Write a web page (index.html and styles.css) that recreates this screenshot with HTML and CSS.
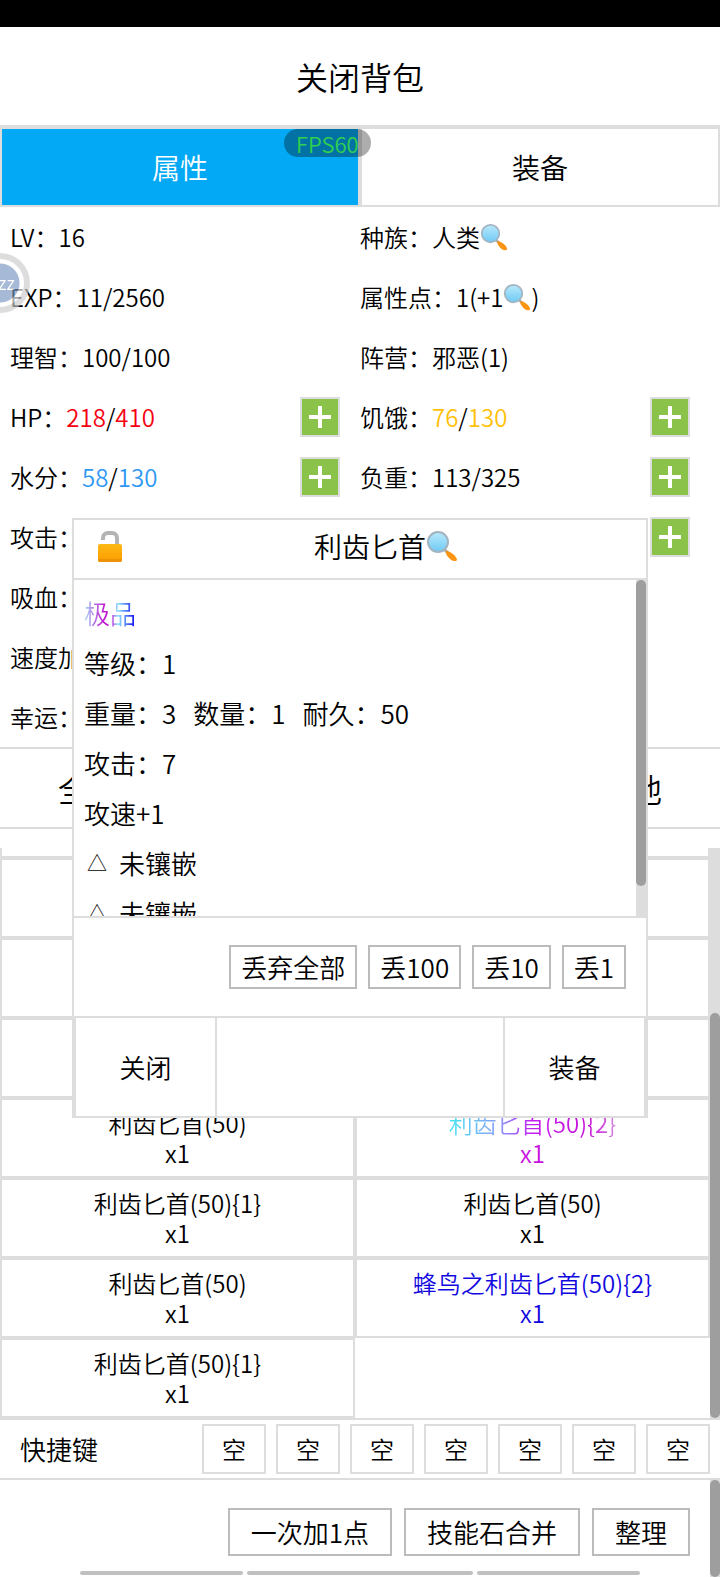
FILE: index.html
```html
<!DOCTYPE html>
<html lang="zh-CN">
<head>
    <meta charset="utf-8">
    <meta name="viewport" content="width=device-width, initial-scale=1">
    <title>背包</title>
    <link rel="stylesheet" href="styles.css">
</head>
<body>
    <!-- shared icons -->
    <svg class="defs" width="0" height="0">
        <defs>
            <linearGradient id="lens" x1="0" y1="0" x2="0" y2="1">
                <stop offset="0" stop-color="#b9e9fb"/>
                <stop offset="1" stop-color="#6fcaf5"/>
            </linearGradient>
            <linearGradient id="gold" x1="0" y1="0" x2="0" y2="1">
                <stop offset="0" stop-color="#fdb913"/>
                <stop offset="1" stop-color="#fb9d00"/>
            </linearGradient>
            <symbol id="magnifier" viewBox="0 0 32 32">
                <path d="M18 19l4 4" stroke="#a9a9a9" stroke-width="3"/>
                <path d="M20 21c3-1 11 5 11 9-1 2-5 1-7-1-3-3-5-6-4-8z" fill="#fb9410"/>
                <circle cx="12" cy="12" r="10" fill="url(#lens)" stroke="#a3b3c0" stroke-width="2"/>
            </symbol>
            <symbol id="unlocked" viewBox="0 0 32 32">
                <path d="M9 10V8c0-3 2-5 5-5h4c3 0 5 2 5 5v7" fill="none" stroke="#b4b4b4" stroke-width="4"/>
                <rect x="4" y="14" width="24" height="18" rx="2" fill="url(#gold)"/>
                <path d="M4 29h24v1a2 2 0 0 1-2 2H6a2 2 0 0 1-2-2z" fill="#ee9208"/>
            </symbol>
        </defs>
    </svg>

    <div class="status-bar"></div>
    <header class="header">
        <button class="close-bag">关闭背包</button>
    </header>

    <nav class="tabs">
        <button class="tab active">属性</button>
        <button class="tab">装备</button>
        <div class="fps">FPS60</div>
    </nav>

    <section class="stats">
        <div class="stat">LV：16</div>
        <div class="stat">种族：人类<svg class="icon"><use href="#magnifier"/></svg></div>
        <div class="stat">EXP：11/2560<div class="float-ball">zz</div></div>
        <div class="stat">属性点：1(+1<svg class="icon"><use href="#magnifier"/></svg>)</div>
        <div class="stat">理智：100/100</div>
        <div class="stat">阵营：邪恶(1)</div>
        <div class="stat">HP：<span class="red">218</span>/<span class="red">410</span><button class="plus" aria-label="HP+"></button></div>
        <div class="stat">饥饿：<span class="yellow">76</span>/<span class="yellow">130</span><button class="plus" aria-label="饥饿+"></button></div>
        <div class="stat">水分：<span class="blue">58</span>/<span class="blue">130</span><button class="plus" aria-label="水分+"></button></div>
        <div class="stat">负重：113/325<button class="plus" aria-label="负重+"></button></div>
        <div class="stat">攻击：</div>
        <div class="stat"><button class="plus" aria-label="加点"></button></div>
        <div class="stat">吸血：</div>
        <div class="stat"></div>
        <div class="stat">速度加</div>
        <div class="stat"></div>
        <div class="stat">幸运：</div>
        <div class="stat"></div>
    </section>

    <nav class="categories">
        <button>全部</button>
        <button>其他</button>
    </nav>

    <section class="bag">
        <ul class="items">
            <li class="item"></li>
            <li class="item"></li>
            <li class="item"></li>
            <li class="item"></li>
            <li class="item"></li>
            <li class="item"></li>
            <li class="item"></li>
            <li class="item"></li>
            <li class="item">利齿匕首(50)<span>x1</span></li>
            <li class="item purple"><span class="rainbow">利齿匕首(50){2}</span><span>x1</span></li>
            <li class="item">利齿匕首(50){1}<span>x1</span></li>
            <li class="item">利齿匕首(50)<span>x1</span></li>
            <li class="item">利齿匕首(50)<span>x1</span></li>
            <li class="item rare">蜂鸟之利齿匕首(50){2}<span>x1</span></li>
            <li class="item">利齿匕首(50){1}<span>x1</span></li>
        </ul>
        <div class="scrollbar bag-scroll"><div class="thumb"></div></div>
    </section>

    <section class="shortcuts">
        <span class="shortcuts-label">快捷键</span>
        <button class="slot">空</button>
        <button class="slot">空</button>
        <button class="slot">空</button>
        <button class="slot">空</button>
        <button class="slot">空</button>
        <button class="slot">空</button>
        <button class="slot">空</button>
    </section>

    <footer class="footer">
        <div class="footer-main">
            <div class="footer-buttons">
                <button class="btn">一次加1点</button>
                <button class="btn">技能石合并</button>
                <button class="btn">整理</button>
            </div>
            <div class="home-bar"><i></i><i class="middle"></i><i></i></div>
        </div>
        <div class="scrollbar"><div class="thumb"></div></div>
    </footer>

    <!-- item detail -->
    <div class="dialog" role="dialog" aria-label="利齿匕首">
        <div class="dialog-header">
            <button class="lock" aria-label="锁定"><svg class="icon-big"><use href="#unlocked"/></svg></button>
            <div class="dialog-title">利齿匕首<svg class="icon-big"><use href="#magnifier"/></svg></div>
        </div>
        <div class="dialog-body">
            <div class="detail">
                <div><span class="quality">极品</span></div>
                <div>等级：1</div>
                <div class="inline"><span>重量：3</span><span>数量：1</span><span>耐久：50</span></div>
                <div>攻击：7</div>
                <div>攻速+1</div>
                <div class="socket"><span class="gem">△</span><span>未镶嵌</span></div>
                <div class="socket"><span class="gem">△</span><span>未镶嵌</span></div>
            </div>
            <div class="scrollbar detail-scroll"><div class="thumb"></div></div>
        </div>
        <div class="dialog-actions">
            <button class="btn small">丢弃全部</button>
            <button class="btn small">丢100</button>
            <button class="btn small">丢10</button>
            <button class="btn small">丢1</button>
        </div>
        <div class="dialog-footer">
            <button>关闭</button>
            <button>装备</button>
        </div>
    </div>
</body>
</html>
```
FILE: styles.css
```css
* {
    box-sizing: border-box;
}

body {
    position: relative;
    margin: 0;
    background-color: #fff;
    color: #000;
    font-family: "Noto Sans CJK SC", sans-serif;
    font-size: 24px;
    font-weight: 350;
    line-height: 30px;
}

button {
    margin: 0;
    padding: 0;
    border: none;
    background: none;
    color: inherit;
    font: inherit;
    cursor: pointer;
}

.defs {
    position: absolute;
}

.status-bar {
    height: 27px;
    background-color: #000;
}

.header {
    height: 100px;
    border-bottom: 2px solid #ddd;
}

.close-bag {
    width: 100%;
    height: 100%;
    font-size: 32px;
}

/* Tabs */
.tabs {
    position: relative;
    display: flex;
}

.tab {
    flex: 1;
    height: 80px;
    border: 2px solid #ddd;
    font-size: 28px;
}

.tab.active {
    background-color: #03a9f4;
    color: #fff;
}

.fps {
    position: absolute;
    top: 2px;
    left: 284px;
    width: 87px;
    height: 28px;
    padding-left: 12px;
    border-radius: 14px;
    background-color: rgba(0, 0, 0, 0.32);
    color: #2fd04f;
    font-size: 22px;
    line-height: 28px;
}

/* Stats */
.stats {
    display: grid;
    grid-template-columns: 1fr 1fr;
    padding: 0 10px;
}

.stat {
    position: relative;
    display: flex;
    align-items: center;
    height: 60px;
    padding-right: 20px;
    white-space: nowrap;
}

.icon {
    width: 28px;
    height: 28px;
}

.icon-big {
    width: 32px;
    height: 32px;
}

.red {
    color: #f5000f;
}

.yellow {
    color: #ffc107;
}

.blue {
    color: #2f98f3;
}

.plus {
    width: 40px;
    height: 40px;
    margin-left: auto;
    border: 2px solid #ddd;
    background:
        linear-gradient(#fff, #fff) center / 22px 4px no-repeat,
        linear-gradient(#fff, #fff) center / 4px 22px no-repeat,
        #8bc34a;
}

/* Floating ball of the system, half off the left edge */
.float-ball {
    position: absolute;
    left: -40px;
    top: -14px;
    width: 60px;
    height: 60px;
    padding-left: 22px;
    border: 6px solid #ccc;
    border-radius: 50%;
    background: radial-gradient(circle, #7895c2 19px, #fff 20px);
    color: #fff;
    font-size: 18px;
    line-height: 46px;
    opacity: 0.65;
}

/* Categories */
.categories {
    display: flex;
    justify-content: space-between;
    height: 82px;
    border-top: 2px solid #ddd;
    border-bottom: 2px solid #ddd;
}

.categories button {
    width: 25%;
    font-size: 32px;
}

/* Bag */
.bag {
    display: flex;
    height: 570px;
    margin-top: 19px;
}

.items {
    display: grid;
    flex: 1;
    grid-template-columns: 1fr 1fr;
    grid-auto-rows: 80px;
    align-content: end;
    margin: 0;
    padding: 0;
    overflow: hidden;
    list-style: none;
}

.item {
    display: flex;
    flex-direction: column;
    align-items: center;
    justify-content: center;
    border: 2px solid #ddd;
}

.purple {
    color: #c812e0;
}

.rare {
    color: #1108e0;
}

.rainbow {
    background: linear-gradient(90deg, #45e6f2, #8b9cf8 30%, #c21cf0 50%, #c812d8 85%, #d48ae0);
    -webkit-background-clip: text;
    background-clip: text;
    color: transparent;
}

.scrollbar {
    display: flex;
    flex-direction: column;
    width: 10px;
    background-color: #ddd;
}

.thumb {
    flex: 1;
    border-radius: 5px;
    background-color: #9e9e9e;
}

.bag-scroll .thumb {
    flex: none;
    height: 71%;
    margin-top: auto;
}

/* Shortcuts */
.shortcuts {
    display: flex;
    align-items: center;
    gap: 10px;
    height: 62px;
    padding: 0 10px 0 20px;
    border-top: 2px solid #ddd;
    border-bottom: 2px solid #ddd;
}

.shortcuts-label {
    flex: 1;
    font-size: 26px;
}

.slot {
    width: 64px;
    height: 50px;
    border: 2px solid #ddd;
}

.btn {
    height: 48px;
    padding: 0 21px;
    border: 2px solid #bbb;
    font-size: 26px;
}

.btn.small {
    height: 44px;
    padding: 0 10px;
}

/* Footer */
.footer {
    display: flex;
    height: 97px;
}

.footer-main {
    display: flex;
    flex: 1;
    flex-direction: column;
    justify-content: space-between;
}

.footer-buttons {
    display: flex;
    justify-content: flex-end;
    gap: 12px;
    padding: 28px 20px 0 0;
}

.home-bar {
    display: flex;
    gap: 4px;
    height: 6px;
    padding: 0 70px 2px 80px;
}

.home-bar i {
    flex: 163;
    border-radius: 2px;
    background-color: #c0c0c0;
}

.home-bar .middle {
    flex: 226;
}

/* Dialog */
.dialog {
    position: absolute;
    top: 518px;
    left: 10%;
    right: 10%;
    border: 2px solid #ddd;
    background-color: #fff;
    font-size: 26px;
}

.dialog-header {
    display: flex;
    height: 60px;
    padding-bottom: 6px;
    border-bottom: 2px solid #ddd;
}

.lock {
    display: flex;
    align-items: center;
    padding-left: 20px;
}

.dialog-title {
    display: flex;
    flex: 1;
    align-items: center;
    justify-content: center;
    font-size: 28px;
}

.dialog-body {
    display: flex;
    height: 338px;
    border-bottom: 2px solid #ddd;
}

.detail {
    flex: 1;
    padding: 8px 10px;
    overflow: hidden;
    line-height: 50px;
}

.quality {
    background: linear-gradient(90deg, #a8dcf8, #c010d0 40%, #c830dc 52%, #90e8ff 65%, #1a20f0 95%);
    -webkit-background-clip: text;
    background-clip: text;
    color: transparent;
}

.inline {
    display: flex;
    gap: 17px;
}

.socket {
    display: flex;
    gap: 9px;
}

.gem {
    width: 26px;
    font-size: 20px;
    text-align: center;
}

.detail-scroll .thumb {
    flex: none;
    height: 91%;
}

.dialog-actions {
    display: flex;
    align-items: center;
    justify-content: flex-end;
    gap: 11px;
    height: 100px;
    padding-right: 20px;
    border-bottom: 2px solid #ddd;
}

.dialog-footer {
    display: flex;
    justify-content: space-between;
    height: 98px;
}

.dialog-footer button {
    width: 25%;
    border-left: 2px solid #ddd;
    border-right: 2px solid #ddd;
}
```
